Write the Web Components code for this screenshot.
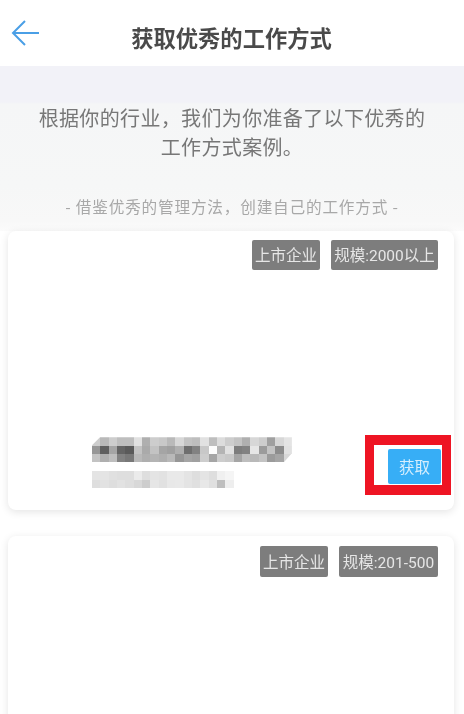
<!DOCTYPE html>
<html lang="zh"><head><meta charset="utf-8"><style>
html,body{margin:0;padding:0;background:#fff}
body{width:464px;height:714px;overflow:hidden;font-family:"Noto Sans CJK SC","Liberation Sans",sans-serif}
</style></head><body>
<app-page>
 <nav-bar>获取优秀的工作方式</nav-bar>
 <intro-panel>
  <span slot="lead">根据你的行业，我们为你准备了以下优秀的<br>工作方式案例。</span>
  <span slot="sub">- 借鉴优秀的管理方法，创建自己的工作方式 -</span>
 </intro-panel>
 <case-card style="--h:279px;--tag-right:16px;--gap:11px;--tag-top:9px;--tag-h:30px" mosaic>
  <tag-chip style="--w:68px">上市企业</tag-chip><tag-chip style="--w:107px">规模:2000以上</tag-chip>
 </case-card>
 <case-card style="--h:200px;--tag-right:16px;--gap:11px;--tag-top:10px;--mt:26px;--tag-h:31px">
  <tag-chip style="--w:68px">上市企业</tag-chip><tag-chip style="--w:99px">规模:201-500</tag-chip>
 </case-card>
</app-page>
<script>
function def(name,html,extra){
  customElements.define(name,class extends HTMLElement{
    constructor(){super();this.attachShadow({mode:'open'}).innerHTML=html;}
    connectedCallback(){if(extra)extra.call(this)}
  });
}
def('app-page',`<style>:host{display:block;width:464px;height:714px;overflow:hidden;background:#fff}</style><slot></slot>`);
def('nav-bar',`<style>
:host{display:flex;align-items:center;justify-content:center;height:66px;background:#fff;position:relative;color:#4a4a4a;font-size:22.3px;font-weight:700}
span{filter:blur(.6px);transform:translate(-.5px,4px)}
svg{position:absolute;left:11px;top:19px;filter:blur(.3px)}
</style><svg width="30" height="30" viewBox="0 0 30 30" fill="none" stroke="#4a9fe6" stroke-width="2"><path d="M28 14H2M14 2L2 14L14 26"/></svg><span><slot></slot></span>`);
def('intro-panel',`<style>
:host{display:flex;flex-direction:column;align-items:center;height:165px;box-sizing:border-box;padding-top:36px;background:linear-gradient(#f2f2f8 0 36px,#f5f6f7 38px,#f6f7f7 120px,#f8f8f8 155px,#fbfbfb 165px);text-align:center}
.lead{font-size:20px;line-height:29px;color:#777;filter:blur(.6px);letter-spacing:.35px;margin-top:1px}
.sub{font-size:15.65px;line-height:22px;color:#a8a8a8;margin-top:35px;filter:blur(.6px);white-space:nowrap;letter-spacing:.8px}
</style><div class="lead"><slot name="lead"></slot></div><div class="sub"><slot name="sub"></slot></div>`);
def('tag-chip',`<style>
:host{display:flex;align-items:center;justify-content:center;width:var(--w);height:var(--tag-h);background:#7d7d7d;border-radius:2px;color:#e6e6e6;font-family:Roboto,"Noto Sans CJK SC",sans-serif;font-size:15.5px;white-space:nowrap}
span{filter:blur(.6px);transform:translateY(-1.5px)}
</style><span><slot></slot></span>`);
const rows=[
 [205,185,205,190,190,225,175,205,200,185,215,195,190,225,190,220,205,195,175,215,205,160,215,228],
 [150,95,165,100,90,195,170,195,165,160,175,110,130,200,252,180,225,125,130,230,155,195,140,225],
 [195,175,190,130,120,185,175,180,175,185,150,165,160,205,165,205,200,165,190,185,195,155,165,215]];
const rows2=[
 [228,228,224,222,222,235,222,228,226,233,233,228,222,228,222,240,245],
 [222,226,222,226,222,216,205,230,225,232,233,228,224,232,224,190,238]];
function cells(rowset,w,h){return rowset.map(r=>`<div style="display:flex">`+r.map(v=>`<i style="display:block;width:${w}px;height:${h}px;background:rgb(${v},${v},${v})"></i>`).join('')+`</div>`).join('');}
def('case-card',`<style>
:host{display:flex;flex-direction:column;box-sizing:border-box;height:var(--h);margin:var(--mt,0) 10px 0 8px;background:#fff;border-radius:8px;box-shadow:0 2px 9px rgba(0,0,0,.11)}
.tags{display:flex;justify-content:flex-end;gap:var(--gap);padding:var(--tag-top) var(--tag-right) 0 0}
.foot{display:none;margin-top:auto;align-items:flex-end;justify-content:space-between;padding:0 13px 26px 84px}
:host([mosaic]) .foot{display:flex}
.info{display:flex;flex-direction:column;gap:9px;margin-bottom:-4px;filter:blur(.5px)}
.m1{clip-path:polygon(8px 0,100% 0,100% 16px,calc(100% - 8px) 100%,0 100%,0 8px)}
.btn{position:relative;display:flex;align-items:center;justify-content:center;width:53px;height:35px;background:#37aef6;border-radius:2px;color:#d5eefd;font-size:15.5px}
.btn span{filter:blur(.5px);transform:translateY(-1px)}
.mark{position:absolute;left:-23px;top:-14px;width:86px;height:60px;box-sizing:border-box;border:solid #ee1423;border-width:10px 9px;pointer-events:none}
</style><div class="tags"><slot></slot></div>
<div class="foot"><div class="info">
<div class="m1"></div><div class="m2"></div></div>
<div class="btn"><span>获取</span><div class="mark"></div></div></div>`,function(){
  this.shadowRoot.querySelector('.m1').innerHTML=cells(rows,8.33,8.33);
  this.shadowRoot.querySelector('.m2').innerHTML=cells(rows2,8.33,8.33);
});
</script>
</body></html>
